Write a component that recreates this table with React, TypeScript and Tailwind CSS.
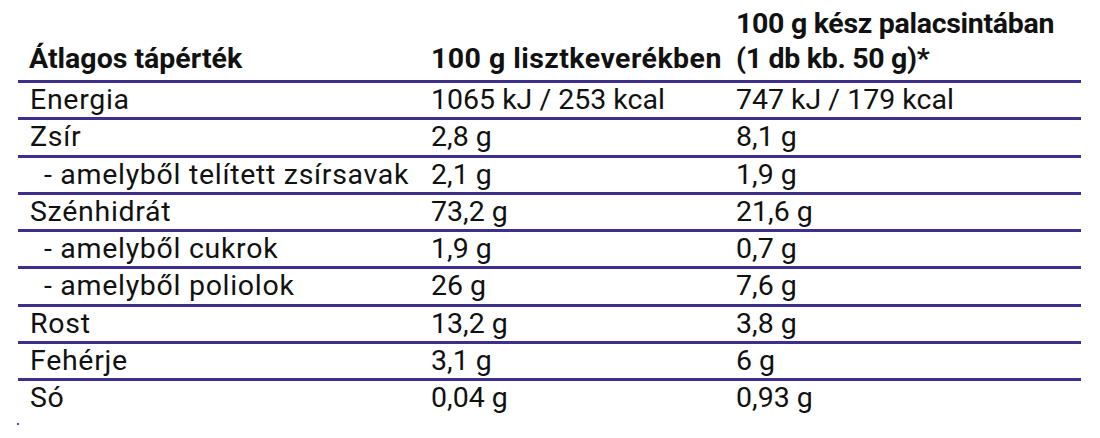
import React from "react";

type Row = { label: string; a: string; b: string; sub?: boolean };

const rows: Row[] = [
  { label: "Energia", a: "1065 kJ / 253 kcal", b: "747 kJ / 179 kcal" },
  { label: "Zsír", a: "2,8 g", b: "8,1 g" },
  { label: "- amelyből telített zsírsavak", a: "2,1 g", b: "1,9 g", sub: true },
  { label: "Szénhidrát", a: "73,2 g", b: "21,6 g" },
  { label: "- amelyből cukrok", a: "1,9 g", b: "0,7 g", sub: true },
  { label: "- amelyből poliolok", a: "26 g", b: "7,6 g", sub: true },
  { label: "Rost", a: "13,2 g", b: "3,8 g" },
  { label: "Fehérje", a: "3,1 g", b: "6 g" },
  { label: "Só", a: "0,04 g", b: "0,93 g" },
];

export default function App() {
  return (
    <div
      className="w-[1100px] h-[438px] bg-white text-[#111111] overflow-hidden"
      style={{ fontFamily: "Roboto, 'Liberation Sans', sans-serif" }}
    >
      <div className="ml-[18px] w-[1063px]">
        <div className="grid grid-cols-[413px_305px_1fr] h-[83px] items-end pb-[4px] border-b-[3px] border-[#3d2f8f] text-[28.5px] leading-[35px] font-bold whitespace-nowrap">
          <div className="pl-[11px]">Átlagos tápérték</div>
          <div className="tracking-[0.45px]">100 g lisztkeverékben</div>
          <div className="tracking-[-0.3px]">
            100 g kész palacsintában
            <br />
            (1 db kb. 50 g)*
          </div>
        </div>
        {rows.map((r, i) => (
          <div
            key={i}
            className={
              "grid grid-cols-[413px_305px_1fr] text-[28.5px] leading-[34.3px] whitespace-nowrap " +
              (i < rows.length - 1 ? "border-b-[3px] border-[#3d2f8f]" : "")
            }
          >
            <div className={(r.sub ? "pl-[26px]" : "pl-[12px]") + " tracking-[0.7px]"}>{r.label}</div>
            <div>{r.a}</div>
            <div>{r.b}</div>
          </div>
        ))}
      </div>
      <div className="ml-[17px] mt-[7px] w-[2px] h-[2px] bg-[#5a4ca8]" />
    </div>
  );
}
